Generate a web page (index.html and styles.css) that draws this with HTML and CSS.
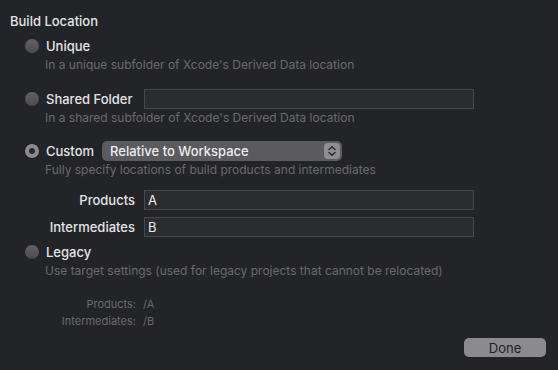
FILE: index.html
```html
<!DOCTYPE html>
<html lang="en">
<head>
  <meta charset="UTF-8" />
  <title>Build Location</title>
  <link rel="stylesheet" href="styles.css">
</head>
<body>
  <div class="sheet">
    <div class="title">Build Location</div>

    <div class="option first">
      <div class="row">
        <span class="radio"></span>
        <span class="name">Unique</span>
      </div>
      <div class="desc">In a unique subfolder of Xcode's Derived Data location</div>
    </div>

    <div class="option">
      <div class="row">
        <span class="radio"></span>
        <span class="name wide">Shared Folder</span>
        <span class="field"></span>
      </div>
      <div class="desc">In a shared subfolder of Xcode's Derived Data location</div>
    </div>

    <div class="option">
      <div class="row">
        <span class="radio on"></span>
        <span class="name">Custom</span>
        <div class="popup">
          <span>Relative to Workspace</span>
          <span class="stepper">
            <svg width="16" height="16" viewBox="0 0 16 16">
              <path d="M5 6.5 L8 3.8 L11 6.5 M5 9.5 L8 12.2 L11 9.5" fill="none" stroke="#2a2a2d" stroke-width="1.5" stroke-linecap="round" stroke-linejoin="round" />
            </svg>
          </span>
        </div>
      </div>
      <div class="desc">Fully specify locations of build products and intermediates</div>
    </div>

    <div class="paths">
      <label>Products</label>
      <span class="field">A</span>
      <label>Intermediates</label>
      <span class="field">B</span>
    </div>

    <div class="option legacy">
      <div class="row">
        <span class="radio"></span>
        <span class="name">Legacy</span>
      </div>
      <div class="desc">Use target settings (used for legacy projects that cannot be relocated)</div>
    </div>

    <div class="summary">
      <span class="key">Products:</span>
      <span>/A</span>
      <span class="key">Intermediates:</span>
      <span>/B</span>
    </div>

    <div class="footer">
      <button class="done">Done</button>
    </div>
  </div>
</body>
</html>
```

FILE: styles.css
```css
:root {
  --bg: #232428;
  --text: #e4e4e6;
  --muted: #6a6a6f;
  --field-bg: #2b2c30;
  --field-border: #48494d;
}

body {
  margin: 0;
  background-color: var(--bg);
  color: var(--text);
  font-family: 'Inter', 'Liberation Sans', sans-serif;
  font-size: 13px;
}

.sheet {
  width: 558px;
  height: 370px;
  box-sizing: border-box;
  padding-top: 13px;
  display: flex;
  flex-direction: column;
}

.title {
  padding-left: 10px;
  line-height: 16px;
  font-weight: 500;
}

.option {
  margin-top: 16px;
}

.option.first {
  margin-top: 7px;
}

.option.legacy {
  margin-top: 5px;
}

.row {
  display: flex;
  align-items: center;
  height: 20px;
  padding-left: 25px;
}

.radio {
  width: 14px;
  height: 14px;
  border-radius: 50%;
  box-sizing: border-box;
  background: linear-gradient(#626266, #4b4b4f);
  margin-right: 7px;
  flex-shrink: 0;
}

.radio.on {
  background: #2a2a2d;
  border: 4px solid #8d8d91;
}

.name {
  font-weight: 500;
}

.name.wide {
  width: 98px;
}

.desc {
  margin-top: 1px;
  padding-left: 45px;
  line-height: 16px;
  font-size: 12px;
  color: var(--muted);
}

.field {
  display: block;
  width: 330px;
  height: 20px;
  box-sizing: border-box;
  background-color: var(--field-bg);
  border: 1px solid var(--field-border);
  padding: 0 3px;
  line-height: 19px;
  font-size: 13px;
  color: #eeeeee;
}

.popup {
  margin-left: 8px;
  width: 240px;
  height: 20px;
  box-sizing: border-box;
  background-color: #5b5b5f;
  border-radius: 5px;
  display: flex;
  align-items: center;
  justify-content: space-between;
  padding: 0 2px 0 8px;
  color: #ececee;
  font-weight: 500;
}

.stepper {
  width: 16px;
  height: 16px;
  border-radius: 4px;
  background-color: #8e8e92;
  display: flex;
}

.option:nth-child(4) {
  margin-top: 15px;
}

.paths {
  margin-top: 12px;
  display: grid;
  grid-template-columns: 135px 330px;
  column-gap: 9px;
  row-gap: 7px;
  align-items: center;
}

.paths label {
  text-align: right;
  font-weight: 500;
}

.summary {
  margin-top: 17px;
  display: grid;
  grid-template-columns: 136px auto;
  column-gap: 7px;
  line-height: 17px;
  font-size: 11px;
  color: var(--muted);
}

.summary .key {
  text-align: right;
}

.footer {
  display: flex;
  justify-content: flex-end;
  padding-right: 12px;
  margin-top: 8px;
}

.done {
  width: 82px;
  height: 19px;
  border: none;
  border-radius: 5px;
  background-color: #8b8b8f;
  color: #1f1f22;
  font-family: inherit;
  font-size: 13px;
  padding: 0;
}
```
